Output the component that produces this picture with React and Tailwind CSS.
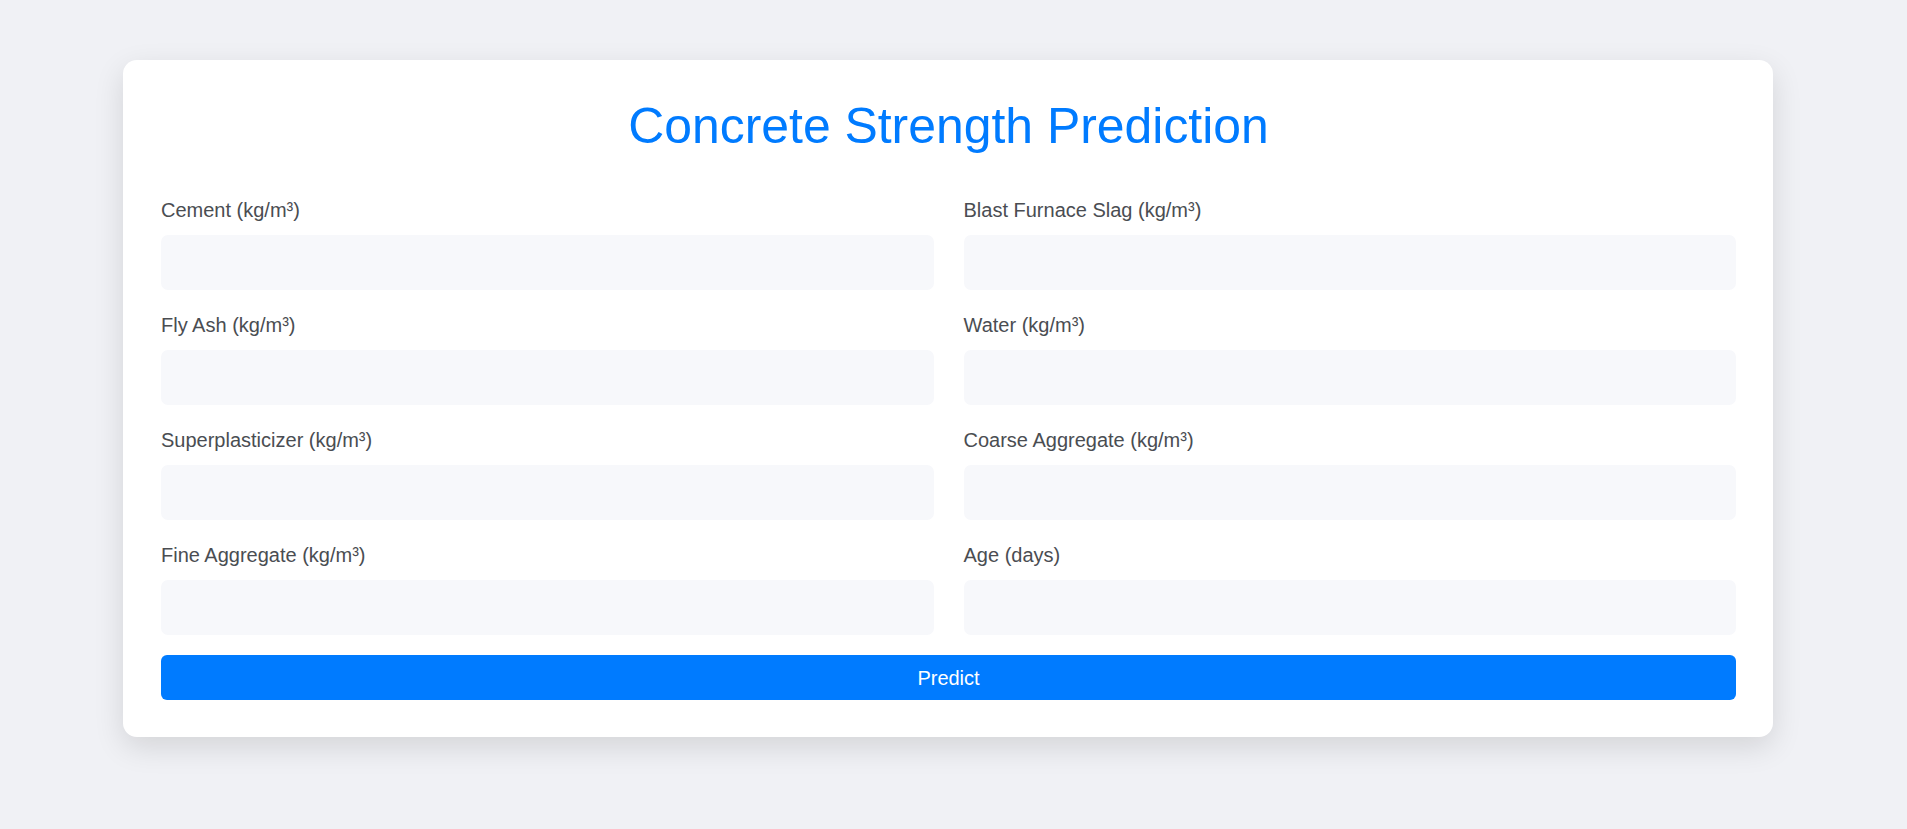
// Concrete Strength Prediction form

import React, { useState } from 'react';

const FIELDS = [
  { name: 'cement', label: 'Cement (kg/m³)' },
  { name: 'slag', label: 'Blast Furnace Slag (kg/m³)' },
  { name: 'flyash', label: 'Fly Ash (kg/m³)' },
  { name: 'water', label: 'Water (kg/m³)' },
  { name: 'superplasticizer', label: 'Superplasticizer (kg/m³)' },
  { name: 'coarse', label: 'Coarse Aggregate (kg/m³)' },
  { name: 'fine', label: 'Fine Aggregate (kg/m³)' },
  { name: 'age', label: 'Age (days)' },
];

const Field = ({ name, label, value, onChange }) => (
  <div>
    <label htmlFor={name} className="block text-[20px] leading-[23px] text-[#4a4d52] mb-[13px]">
      {label}
    </label>
    <input
      id={name}
      type="number"
      value={value}
      onChange={(e) => onChange(name, e.target.value)}
      className="block w-full h-[55px] px-4 rounded-[7px] bg-[#f7f8fb] text-[20px] text-[#333] outline-none focus:ring-2 focus:ring-[#007bff]/30"
    />
  </div>
);

export default function App() {
  const [values, setValues] = useState({});

  const handleChange = (name, v) => {
    setValues((prev) => ({ ...prev, [name]: v }));
  };

  return (
    <div className="min-h-screen bg-[#f0f1f5] pt-[60px] pb-10 font-['Liberation_Sans',Arial,sans-serif]">
      <div className="ml-[123px] w-[1650px] bg-white rounded-[14px] shadow-[0_10px_30px_rgba(0,0,0,0.12)] pt-[38px] pb-[37px] pl-[38px] pr-[37px]">
        {/* ===== TITLE ===== */}
        <h1 className="text-center text-[49.9px] leading-[57px] text-[#007bff] mb-[44px]">
          Concrete Strength Prediction
        </h1>

        {/* ===== INPUT GRID ===== */}
        <form onSubmit={(e) => e.preventDefault()}>
          <div className="grid grid-cols-2 gap-x-[30px] gap-y-[24px]">
            {FIELDS.map((f) => (
              <Field key={f.name} name={f.name} label={f.label} value={values[f.name] || ''} onChange={handleChange} />
            ))}
          </div>

          {/* ===== SUBMIT ===== */}
          <button
            type="submit"
            className="mt-[20px] block w-full h-[45px] rounded-[6px] bg-[#007bff] text-white text-[20px] hover:bg-[#0069d9]"
          >
            Predict
          </button>
        </form>
      </div>
    </div>
  );
}
